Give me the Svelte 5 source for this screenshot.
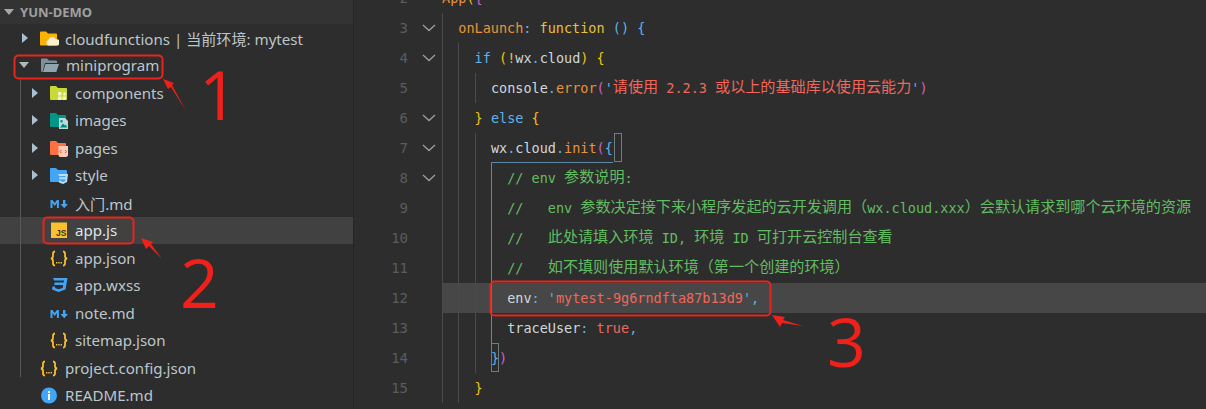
<script>
  const C = {
    plain: "#d0d8dc",
    prop: "#e8943a",
    key: "#e6c23c",
    blue: "#5cb4ee",
    yellow: "#f2c40f",
    red: "#f0675c",
    green: "#62bd62",
    pink: "#c764c7",
  };

  const files = [
    { name: "cloudfunctions | 当前环境: mytest", depth: 0, arrow: "closed", icon: "cloud" },
    { name: "miniprogram", depth: 0, arrow: "open", icon: "open" },
    { name: "components", depth: 1, arrow: "closed", icon: "components" },
    { name: "images", depth: 1, arrow: "closed", icon: "images" },
    { name: "pages", depth: 1, arrow: "closed", icon: "pages" },
    { name: "style", depth: 1, arrow: "closed", icon: "style" },
    { name: "入门.md", depth: 1, icon: "md" },
    { name: "app.js", depth: 1, icon: "js", selected: true },
    { name: "app.json", depth: 1, icon: "json" },
    { name: "app.wxss", depth: 1, icon: "css" },
    { name: "note.md", depth: 1, icon: "md" },
    { name: "sitemap.json", depth: 1, icon: "json" },
    { name: "project.config.json", depth: 0, icon: "json" },
    { name: "README.md", depth: 0, icon: "info" },
  ];

  // each code line: number, fold marker, indent level, coloured tokens
  const lines = [
    { n: 2, indent: 0, tokens: [["App", C.prop], ["(", C.yellow], ["{", C.pink]] },
    { n: 3, fold: true, indent: 1, tokens: [["onLaunch", C.prop], [": ", C.blue], ["function", C.key], [" ", C.plain], ["()", C.blue], [" ", C.plain], ["{", C.blue]] },
    { n: 4, fold: true, indent: 2, tokens: [["if", C.blue], [" ", C.plain], ["(", C.yellow], ["!", C.key], ["wx", C.plain], [".", C.blue], ["cloud", C.plain], [")", C.yellow], [" ", C.plain], ["{", C.yellow]] },
    { n: 5, indent: 3, tokens: [["console", C.plain], [".", C.blue], ["error", C.prop], ["(", C.pink], ["'", C.blue], ["请使用 2.2.3 或以上的基础库以使用云能力", C.red], ["'", C.blue], [")", C.pink]] },
    { n: 6, fold: true, indent: 2, tokens: [["}", C.yellow], [" ", C.plain], ["else", C.blue], [" ", C.plain], ["{", C.yellow]] },
    { n: 7, fold: true, indent: 3, tokens: [["wx", C.plain], [".", C.blue], ["cloud", C.plain], [".", C.blue], ["init", C.prop], ["(", C.pink], ["{", C.blue]] },
    { n: 8, fold: true, indent: 4, tokens: [["// env 参数说明:", C.green]] },
    { n: 9, indent: 4, tokens: [["//   env 参数决定接下来小程序发起的云开发调用（wx.cloud.xxx）会默认请求到哪个云环境的资源", C.green]] },
    { n: 10, indent: 4, tokens: [["//   此处请填入环境 ID, 环境 ID 可打开云控制台查看", C.green]] },
    { n: 11, indent: 4, tokens: [["//   如不填则使用默认环境（第一个创建的环境）", C.green]] },
    { n: 12, indent: 4, active: true, tokens: [["env", C.plain], [": ", C.blue], ["'", C.blue], ["mytest-9g6rndfta87b13d9", C.red], ["'", C.blue], [",", C.blue]] },
    { n: 13, indent: 4, tokens: [["traceUser", C.plain], [": ", C.blue], ["true", C.red], [",", C.blue]] },
    { n: 14, indent: 3, tokens: [["}", C.blue], [")", C.pink]] },
    { n: 15, indent: 2, tokens: [["}", C.yellow]] },
  ];

  const pieces = (text) => text.split(/([\u3000-\u9fff\uff00-\uffef]+)/).filter(Boolean);
  const isCjk = (text) => /[\u3000-\u9fff\uff00-\uffef]/.test(text);
</script>

<div class="window">
  <aside class="sidebar">
    <div class="head">
      <span class="head-arrow"></span>
      <span>YUN-DEMO</span>
    </div>
    <div class="tree">
      <span class="tree-guide"></span>
      {#each files as f}
        <div class="row" class:selected={f.selected} class:nested={f.depth === 1}>
          <span class="arrow {f.arrow || ''}"></span>
          <svg class="icon" viewBox="0 0 20 20" width="20" height="20">
            {#if f.icon === "cloud"}
              <path d="M1 4.5a1 1 0 0 1 1-1h5l2 2h8a1 1 0 0 1 1 1v10a1 1 0 0 1-1 1H2a1 1 0 0 1-1-1z" fill="#fdb203" />
              <path d="M9 17.5a3 3 0 0 1 .4-5.6 4 4 0 0 1 7.4-.6 3.2 3.2 0 0 1 1.6 6.2z" fill="#fdf1cf" />
            {:else if f.icon === "open"}
              <path d="M1 4.5a1 1 0 0 1 1-1h5l2 2h7a1 1 0 0 1 1 1V8H5L2.5 17H2a1 1 0 0 1-1-1z" fill="#7f8f98" />
              <path d="M5.5 9H19l-2.7 8H3z" fill="#90a4ae" />
            {:else if f.icon === "components"}
              <path d="M1 4a1 1 0 0 1 1-1h5l2 2h8a1 1 0 0 1 1 1v10a1 1 0 0 1-1 1H2a1 1 0 0 1-1-1z" fill="#c9d936" />
              <path d="M9 9h3.5v3.5H9zM9 13.5h3.5V17H9zM13.5 13.5H17V17h-3.5zM13.6 11l2-2 2 2-2 2z" fill="#f2f6be" />
            {:else if f.icon === "images"}
              <path d="M1 4a1 1 0 0 1 1-1h5l2 2h7a1 1 0 0 1 1 1v10a1 1 0 0 1-1 1H2a1 1 0 0 1-1-1z" fill="#009688" />
              <path d="M10 8h6l3 3v8h-9z" fill="#b7ded9" />
              <path d="M11 17.5l3-4 2 2 1-1 1 3zM12.5 10a1.2 1.2 0 1 1 0 2.5 1.2 1.2 0 0 1 0-2.5z" fill="#00897b" />
            {:else if f.icon === "pages"}
              <path d="M1 4a1 1 0 0 1 1-1h5l2 2h7a1 1 0 0 1 1 1v10a1 1 0 0 1-1 1H2a1 1 0 0 1-1-1z" fill="#ff7043" />
              <path d="M9.5 8H19v8.5a2.5 2.5 0 0 1-2.5 2.5h-5a2 2 0 0 1-2-2z" fill="#ffccbc" />
              <path d="M12.4 12l-1.4 1.6 1.4 1.6M16 12l1.4 1.6-1.4 1.6" fill="none" stroke="#e64a19" stroke-width="1" />
            {:else if f.icon === "style"}
              <path d="M1 4a1 1 0 0 1 1-1h5l2 2h8a1 1 0 0 1 1 1v10a1 1 0 0 1-1 1H2a1 1 0 0 1-1-1z" fill="#42a5f5" />
              <path d="M9.5 9H19l-1 8-4 2-4-1.6-.2-2h2l.1.8 2.1.8 2.2-.8.2-2h-6l-.2-2h6.4l.1-1.2H9.7z" fill="#bbdefb" />
            {:else if f.icon === "md"}
              <path d="M1.5 15V7h2l2.2 3 2.2-3h2v8h-2v-5L5.7 13l-2.2-3v5zM14 7h2.4v4H19l-3.8 4.3L11.4 11H14z" fill="#42a5f5" />
            {:else if f.icon === "js"}
              <rect x="2" y="2.5" width="16" height="15.500" fill="#fbc02d" />
              <text class="js-label" x="7" y="16">JS</text>
            {:else if f.icon === "json"}
              <path d="M6 3.500C3.500 3.500 4 6 4 8c0 1.500-.5 2.200-2 2.500 1.500.3 2 1 2 2.500 0 2-.5 4.500 2 4.500M14 3.500c2.500 0 2 2.500 2 4.500 0 1.500.5 2.200 2 2.500-1.500.3-2 1-2 2.500 0 2 .5 4.500-2 4.500" fill="none" stroke="#f9bd2e" stroke-width="1.800" />
              <path d="M7 14h1.400v1.400H7zM9.300 14h1.400v1.400H9.300zM11.600 14H13v1.400h-1.400z" fill="#f9bd2e" />
            {:else if f.icon === "css"}
              <path d="M4 3h14.500l-2 11.500L9.500 17 3 14.500l.6-3h2.700l-.3 1.500 3.500 1.300 4.200-1.300.5-3H5.200l.5-2.600h9l.4-1.800H5.200z" fill="#42a5f5" />
            {:else if f.icon === "info"}
              <circle cx="10" cy="10.500" r="8" fill="#42a5f5" />
              <path d="M9 9h2v6H9zM9 6h2v2H9z" fill="#fff" />
            {/if}
          </svg>
          <span class="label">{f.name}</span>
        </div>
      {/each}
    </div>
  </aside>

  <main class="editor">
    {#each lines as l}
      <div class="line" class:active={l.active}>
        <span class="num">{l.n}</span>
        <span class="fold">
          {#if l.fold}
            <svg viewBox="0 0 14 8" width="14" height="8"><path d="M1 1l6 5.500L13 1" fill="none" stroke="#9a9fa3" stroke-width="1.300" /></svg>
          {/if}
        </span>
        <span class="code">
          {#each Array(l.indent) as _, i}
            <span class="guide" class:current={i === 3 && l.n >= 8 && l.n <= 13}></span>
          {/each}
          {#each l.tokens as [text, color]}
            {#each pieces(text) as p}
              <span class="tok" class:cjk={isCjk(p)} style="color: {color}">{p}</span>
            {/each}
          {/each}
        </span>
      </div>
    {/each}
    <span class="match match-top"></span>
    <span class="match match-bottom"></span>
    <span class="block-top"></span>
  </main>

  <!-- red annotations drawn over the screenshot -->
  <svg class="marks" viewBox="0 0 1206 409" width="1206" height="409">
    <g fill="none" stroke="#e8241c" stroke-width="2">
      <rect x="14.500" y="55.500" width="148" height="23" rx="4" />
      <rect x="43.500" y="217.500" width="90" height="26" rx="4" />
      <rect x="490.500" y="281.500" width="280" height="34" rx="4" />
    </g>
    <g fill="#f0201a">
      <path d="M163 79l11 4-2 2 14 26-15-24-3 2z" />
      <path d="M141 238l12 4-2 2 11 15-13-13-3 3z" />
      <path d="M772 315l13 2-2 3 20 6-21-3-2 4z" />
    </g>
  </svg>
  <span class="digit digit-1">1</span>
  <span class="digit digit-2">2</span>
  <span class="digit digit-3">3</span>
</div>

<style>
  :global(body) {
    margin: 0;
    background: #2d2d2d;
  }

  .window {
    position: relative;
    display: flex;
    width: 1206px;
    height: 409px;
    overflow: hidden;
    background: #2d2d2d;
  }

  .sidebar {
    flex: 0 0 353px;
    border-right: 1px solid #252525;
    font-family: "Noto Sans", "Noto Sans CJK SC", sans-serif;
  }

  .head {
    display: flex;
    align-items: center;
    gap: 6px;
    height: 24px;
    padding-left: 4px;
    background: #333;
    color: #a0a0a0;
    font-size: 13px;
    font-weight: 700;
  }

  .head-arrow {
    width: 0;
    height: 0;
    border-left: 5px solid transparent;
    border-right: 5px solid transparent;
    border-top: 6px solid #a8a8a8;
  }

  .tree {
    position: relative;
  }

  .tree-guide {
    position: absolute;
    left: 20px;
    top: 56px;
    height: 297px;
    border-left: 1px solid #585858;
  }

  .row {
    display: flex;
    align-items: center;
    height: 27.500px;
    padding-left: 21px;
    color: #bcc6cc;
    font-size: 15.100px;
    white-space: nowrap;
  }

  .row.nested {
    padding-left: 31px;
  }

  .row.selected {
    background: #414141;
    color: #dfe5e8;
  }

  .arrow {
    flex: 0 0 6px;
    width: 0;
    height: 0;
    margin-right: 12px;
  }

  .arrow.closed {
    flex: 0 0 0;
    margin-right: 11px;
    margin-left: 1px;
    border-top: 5px solid transparent;
    border-bottom: 5px solid transparent;
    border-left: 6px solid #a8c0d0;
  }

  .arrow.open {
    flex: 0 0 0;
    margin-left: -2px;
    margin-right: 11px;
    border-left: 5px solid transparent;
    border-right: 5px solid transparent;
    border-top: 6px solid #b0b8bc;
  }

  .icon {
    flex: none;
    margin-right: 6px;
  }

  .js-label {
    font-family: "Liberation Sans", sans-serif;
    font-size: 8.500px;
    font-weight: 700;
    fill: #3a3320;
  }

  .editor {
    position: relative;
    flex: 1;
    min-width: 0;
    margin-top: -17px;
    font-family: "DejaVu Sans Mono", "Noto Sans CJK SC", monospace;
    font-size: 13.500px;
  }

  .line {
    display: flex;
    align-items: center;
    height: 30px;
    white-space: pre;
  }

  .line.active {
    background: linear-gradient(to right, transparent 88px, #474747 88px);
  }

  .num {
    flex: 0 0 54px;
    text-align: right;
    color: #585d60;
    font-size: 14px;
  }

  .fold {
    flex: 0 0 34px;
    display: flex;
    justify-content: center;
    padding-left: 8px;
    box-sizing: border-box;
  }

  .code {
    display: flex;
    align-items: center;
    height: 100%;
  }

  .guide {
    flex: none;
    width: 15.300px;
    margin-right: 1px;
    height: 100%;
    box-sizing: border-box;
    border-left: 1px solid #4a4a4a;
  }

  .guide.current {
    border-left-color: #5d8aa8;
  }

  .tok.cjk {
    font-size: 15.100px;
    line-height: 1;
  }

  .match {
    position: absolute;
    left: 260px;
    width: 8px;
    height: 29px;
    box-sizing: border-box;
    border: 1px solid #6e7d7d;
  }

  .match-top {
    top: 150px;
  }

  .match-bottom {
    left: 137px;
    top: 360px;
  }

  .block-top {
    position: absolute;
    left: 137px;
    top: 179px;
    width: 122px;
    border-top: 1px solid #5d8aa8;
  }

  .marks {
    position: absolute;
    inset: 0;
    pointer-events: none;
  }

  .digit {
    position: absolute;
    color: #f0201a;
    font-family: "Open Sans", sans-serif;
    font-size: 68px;
    font-weight: 400;
    line-height: 1;
  }

  .digit-1 {
    left: 199px;
    top: 60px;
  }

  .digit-2 {
    left: 180px;
    top: 248px;
  }

  .digit-3 {
    left: 827px;
    top: 307px;
  }
</style>
